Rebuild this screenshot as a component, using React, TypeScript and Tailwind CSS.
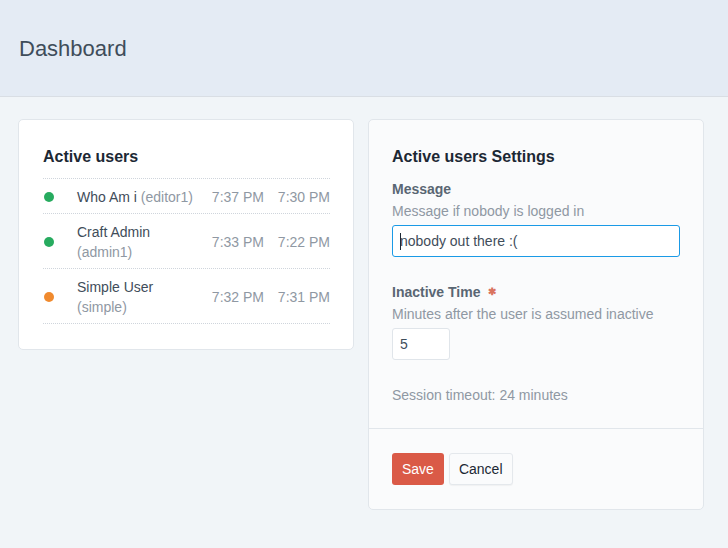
import React from "react";

const users = [
  { name: "Who Am i", user: "editor1", inline: true, color: "bg-[#27ab5f]", t1: "7:37 PM", t2: "7:30 PM" },
  { name: "Craft Admin", user: "admin1", inline: false, color: "bg-[#27ab5f]", t1: "7:33 PM", t2: "7:22 PM" },
  { name: "Simple User", user: "simple", inline: false, color: "bg-[#f08a2e]", t1: "7:32 PM", t2: "7:31 PM" },
];

export default function App() {
  return (
    <div className="min-h-[548px] w-[728px] bg-[#f1f5f8] text-[14px] leading-[20px] text-[#3f4d5a] [font-family:'Liberation_Sans',Arial,sans-serif]">
      <header className="h-[97px] border-b border-[#d9dee4] bg-[#e4ebf4] flex items-center pl-[19px] pt-[2px]">
        <h1 className="text-[22px] leading-[30px] text-[#3f4d5a] font-normal">Dashboard</h1>
      </header>
      <main className="flex gap-[14px] pl-[18px] pt-[22px] items-start">
        <section className="w-[336px] rounded-[5px] bg-white border border-[#e1e6eb] pl-[24px] pr-[23px] pt-[25px] pb-[25px]">
          <h2 className="text-[16px] leading-[24px] font-bold text-[#1c2834] mb-[9px]">Active users</h2>
          <div className="border-t border-dotted border-[#cfd5dc]">
            {users.map((u) => (
              <div key={u.user} className="flex items-center pt-[8px] pb-[6px] border-b border-dotted border-[#cfd5dc]">
                <div className="w-[34px] flex items-center pl-[1px]">
                  <span className={`block w-[10px] h-[10px] rounded-full ${u.color}`} />
                </div>
                <div className="flex-1">
                  {u.inline ? (
                    <div>
                      {u.name} <span className="text-[#8f98a3]">({u.user})</span>
                    </div>
                  ) : (
                    <>
                      <div>{u.name}</div>
                      <div className="text-[#8f98a3]">({u.user})</div>
                    </>
                  )}
                </div>
                <div className="w-[66px] text-right text-[#8f98a3]">{u.t1}</div>
                <div className="w-[66px] text-right text-[#8f98a3]">{u.t2}</div>
              </div>
            ))}
          </div>
        </section>
        <section className="w-[336px] rounded-[5px] bg-[#fafbfc] border border-[#e1e6eb]">
          <div className="px-[23px] pt-[25px] pb-[23px]">
            <h2 className="text-[16px] leading-[24px] font-bold text-[#1c2834] mb-[10px]">Active users Settings</h2>
            <div className="font-bold text-[#596673]">Message</div>
            <div className="mt-[2px] text-[#8f98a3]">Message if nobody is logged in</div>
            <div className="relative mt-[4px]">
              <input
                readOnly
                value="nobody out there :("
                className="w-[288px] h-[32px] rounded-[3px] border border-[#1a9ae6] bg-white px-[7px] text-[#3f4d5a] outline-none [font-family:inherit] text-[14px]"
              />
              <span className="absolute left-[8px] top-[8px] w-[1px] h-[17px] bg-[#1c2834]" />
            </div>
            <div className="mt-[25px] font-bold text-[#596673] flex items-center">
              Inactive Time
              <span className="ml-[8px] text-[#d9735f] text-[10px] leading-[20px]">✱</span>
            </div>
            <div className="mt-[2px] text-[#8f98a3]">Minutes after the user is assumed inactive</div>
            <input
              readOnly
              value="5"
              className="mt-[4px] w-[58px] h-[32px] rounded-[3px] border border-[#e0e5ea] bg-white px-[7px] text-[#3f4d5a] outline-none [font-family:inherit] text-[14px]"
            />
            <div className="mt-[25px] text-[#8f98a3]">Session timeout: 24 minutes</div>
          </div>
          <div className="border-t border-[#e1e6eb] px-[23px] pt-[24px] pb-[24px] flex gap-[5px]">
            <button className="h-[32px] px-[10px] rounded-[3px] bg-[#da5a47] text-white">Save</button>
            <button className="h-[32px] px-[9px] rounded-[3px] bg-[#fafbfc] text-[#1c2834] border border-[#e4e8ec] shadow-[0_1px_1px_rgba(0,0,0,0.04)]">Cancel</button>
          </div>
        </section>
      </main>
    </div>
  );
}
